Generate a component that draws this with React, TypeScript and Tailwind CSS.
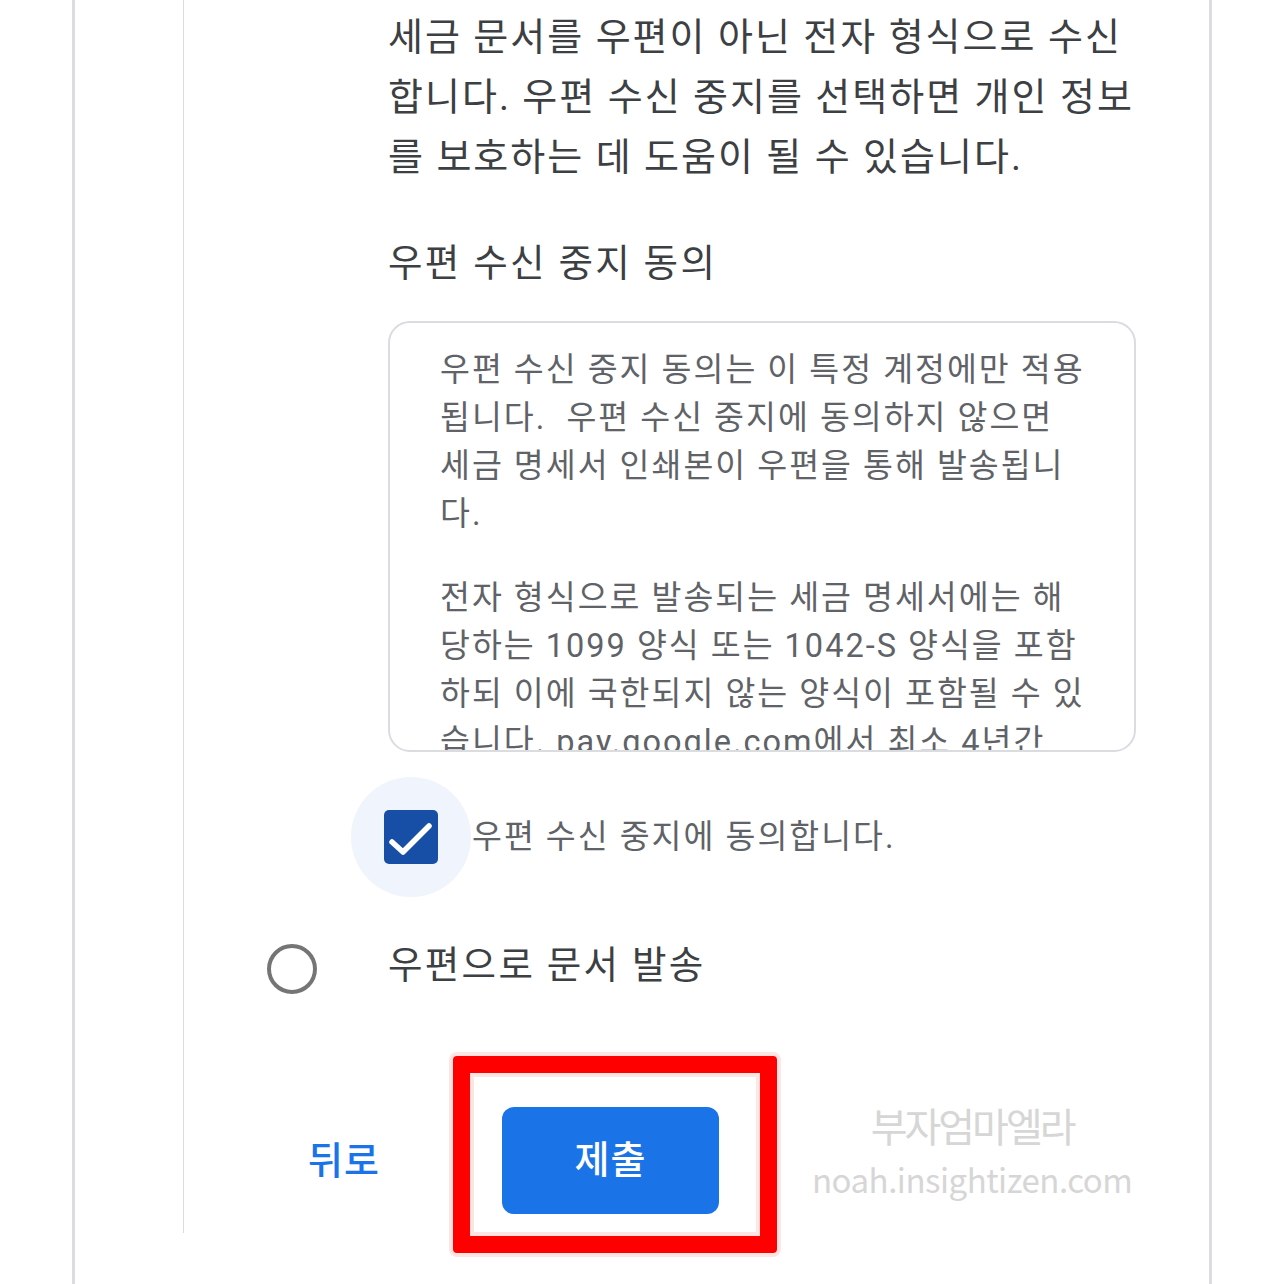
const intro = [
  '세금 문서를 우편이 아닌 전자 형식으로 수신',
  '합니다. 우편 수신 중지를 선택하면 개인 정보',
  '를 보호하는 데 도움이 될 수 있습니다.',
]

const consentA = [
  '우편 수신 중지 동의는 이 특정 계정에만 적용',
  '됩니다.  우편 수신 중지에 동의하지 않으면',
  '세금 명세서 인쇄본이 우편을 통해 발송됩니',
  '다.',
]

const consentB = [
  '전자 형식으로 발송되는 세금 명세서에는 해',
  '당하는 1099 양식 또는 1042-S 양식을 포함',
  '하되 이에 국한되지 않는 양식이 포함될 수 있',
  '습니다. pay.google.com에서 최소 4년간',
]

function CheckIcon() {
  return (
    <svg viewBox="0 0 54 54" className="w-[54px] h-[54px]">
      <rect x="0" y="0" width="54" height="54" rx="5" fill="#174ea6" />
      <polyline points="8,32 19,42 45,16" fill="none" stroke="#ffffff" strokeWidth="5.5" strokeLinecap="round" strokeLinejoin="round" />
    </svg>
  )
}

export default function App() {
  return (
    <div className="w-[1284px] h-[1284px] overflow-hidden bg-white font-['Roboto','Noto_Sans_CJK_KR',sans-serif]">
      <div className="ml-[72px] w-[1140px] h-full border-x-[3px] border-[#dadce0]">
        <div className="ml-[108px] border-l border-[#dadce0] pb-[19px]">
          {/* intro */}
          <div className="pl-[204px] pt-[7px] text-[38px] leading-[60px] tracking-[2px] text-[#3c4043]">
            {intro.map((l) => (
              <div key={l} className="whitespace-pre">{l}</div>
            ))}
          </div>

          <h2 className="mt-[46px] pl-[204px] text-[37.5px] leading-[60px] tracking-[2.3px] text-[#3c4043]">우편 수신 중지 동의</h2>

          {/* consent text box */}
          <div className="ml-[204px] mt-[28px] w-[748px] h-[431px] overflow-hidden rounded-[22px] border-2 border-[#dadce0] pl-[50px] pt-[23px] text-[32.5px] leading-[48px] tracking-[2px] text-[#5f6368]">
            {consentA.map((l) => (
              <div key={l} className="whitespace-pre">{l}</div>
            ))}
            <div className="mt-[36px]">
              {consentB.map((l) => (
                <div key={l} className="whitespace-pre">{l}</div>
              ))}
            </div>
          </div>

          {/* checkbox */}
          <div className="mt-[25px] flex items-center">
            <div className="ml-[167px] w-[120px] h-[120px] rounded-full bg-[#f0f4fc] flex items-center justify-center">
              <CheckIcon />
            </div>
            <span className="ml-[1px] text-[32.5px] leading-[48px] tracking-[2px] text-[#5f6368]">우편 수신 중지에 동의합니다.</span>
          </div>

          {/* radio */}
          <div className="mt-[47px] flex items-center h-[50px]">
            <div className="ml-[83px] w-[50px] h-[50px] rounded-full border-[4px] border-[#757575]" />
            <span className="ml-[71px] -mt-[8px] text-[37.5px] leading-[60px] tracking-[2.3px] text-[#3c4043]">우편으로 문서 발송</span>
          </div>

          {/* actions */}
          <div className="mt-[113px] flex items-center">
            <button className="ml-[124px] text-[38px] font-medium leading-[50px] tracking-[1px] text-[#1a73e8]">뒤로</button>
            <div className="relative ml-[122px]">
              <div className="absolute -left-[49px] -top-[51px] -right-[58px] -bottom-[39px] rounded-[4px] border-[17px] border-[#ff0000] shadow-[0_0_0_4px_#ffe4e4,inset_0_0_0_4px_#ffe4e4]" />
              <button className="relative w-[217px] h-[107px] rounded-[12px] bg-[#1b73e8] text-[38px] font-medium tracking-[1px] text-white">제출</button>
            </div>
            <div className="ml-[93px] flex flex-col items-center text-[#d6d6d6] font-['Noto_Sans_CJK_KR',sans-serif] leading-none">
              <span className="text-[40px] tracking-[-3px] -mt-[20px]">부자엄마엘라</span>
              <span className="mt-[18px] text-[33px] tracking-[-0.5px]">noah.insightizen.com</span>
            </div>
          </div>
        </div>
      </div>
    </div>
  )
}
